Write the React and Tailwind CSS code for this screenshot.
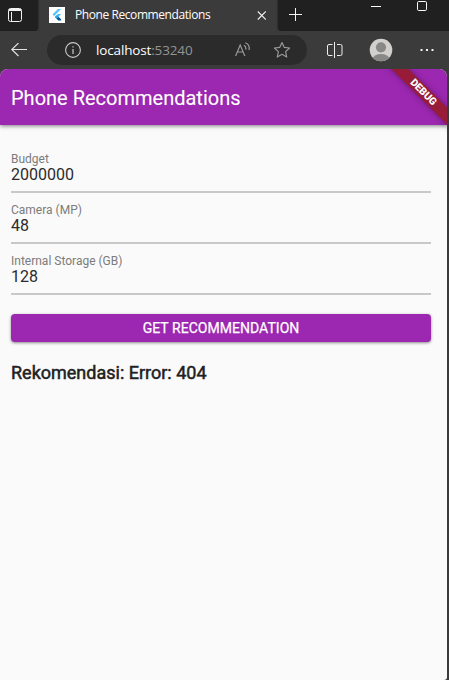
function TabStrip() {
  return (
    <div className="flex h-[31px] bg-[#3b3b3b]">
      <div className="w-[38px] rounded-br-[4px] bg-[#202020] pt-[8px] pl-[8px] shadow-[0_0_2px_#111]">
        <svg width="14" height="14" viewBox="0 0 14 14" fill="none" stroke="#f2f2f2">
          <rect x="0.5" y="0.5" width="13" height="13" rx="2" />
          <path d="M1 1.5H13M1 2.5H13" />
          <path d="M3.5 4V13" />
        </svg>
      </div>
      <div className="flex w-[240px] pt-[7px] pl-[11px]">
        <svg width="16" height="16" viewBox="0 0 16 16">
          <path d="M0 0H16V16H0z" fill="#fff" />
          <path d="M8.9 2H12.1L5.1 9L3.5 7.4z" fill="#54c5f8" />
          <path d="M8.9 7H12.1L9.4 9.8L12.1 12.6H8.9L6.1 9.8z" fill="#45bdf0" />
          <path d="M6.1 9.8L7.7 11.4L9.3 9.8L12.1 12.6V13.6H9.3L5.8 10.1z" fill="#01579b" />
          <path d="M6.1 9.8L7.7 8.2L9.3 9.8L7.7 11.4z" fill="#29a4e8" />
        </svg>
        <span className="ml-[10px] h-4 w-[136px] whitespace-nowrap font-['Open_Sans',sans-serif] text-[12px] leading-4 tracking-[-0.42px] text-white">
          Phone Recommendations
        </span>
        <svg className="mt-[4px] ml-[46px]" width="9" height="9" viewBox="0 0 9 9" stroke="#f2f2f2" strokeWidth="1.1">
          <path d="M.8 .5L8.8 8.5M8.8 .5L.8 8.5" />
        </svg>
      </div>
      <div className="flex flex-1 rounded-bl-[4px] bg-[#202020] shadow-[0_0_2px_#111]">
        <svg className="mt-[8px] ml-[11px]" width="13" height="13" viewBox="0 0 13 13" stroke="#f5f5f5">
          <path d="M0 6.5H13M6.5 0V13" />
        </svg>
        <svg className="mt-[1px] ml-[69px]" width="10" height="10" viewBox="0 0 10 10" stroke="#fff">
          <path d="M0 5.5H10" />
        </svg>
        <svg className="mt-[1px] ml-[36px]" width="10" height="10" viewBox="0 0 10 10" fill="none" stroke="#fff">
          <rect x=".5" y=".5" width="9" height="9" rx="1.2" />
        </svg>
      </div>
    </div>
  );
}

function Toolbar() {
  return (
    <div className="flex h-[38px] items-center bg-[#3b3b3b]">
      <svg className="ml-[11px]" width="16" height="14" viewBox="0 0 16 14" fill="none" stroke="#e4e4e4" strokeWidth="1.1">
        <path d="M16 6.5H.8M7.5 0L.8 6.5L7.5 13" />
      </svg>
      <div className="ml-[20px] flex h-[30px] w-[260px] items-center rounded-full bg-[#2b2b2b]">
        <svg className="ml-[18px]" width="16" height="16" viewBox="0 0 16 16" fill="none" stroke="#c9c9c9">
          <circle cx="8" cy="8" r="7.4" strokeWidth="1.1" />
          <path d="M8 7V12M8 4.2V5.5" strokeWidth="1.2" />
        </svg>
        <span className="ml-[15px] w-[110px] whitespace-nowrap font-['Open_Sans',sans-serif] text-[13.5px] leading-5 tracking-[-0.15px] text-white">
          localhost<span className="text-[#949494]">:53240</span>
        </span>
        <svg className="ml-[29px]" width="16" height="16" viewBox="0 0 16 16" fill="none" stroke="#999">
          <path d="M.6 14L5.2 3.1L9.8 14M2.3 10H8.1M9 3.2C10.6 4.2 11.1 5.8 10.8 7.6M10.3 .8C13.7 2.2 14.7 4.9 14 8" strokeWidth="1.2" />
        </svg>
        <svg className="ml-[22px]" width="18" height="18" viewBox="0 0 18 18" fill="none" stroke="#999">
          <path d="M9 1.5L11.2 6.3L16.6 7L12.6 10.6L13.7 16L9 13.3L4.3 16L5.4 10.6L1.4 7L6.8 6.3z" strokeWidth="1.2" strokeLinejoin="round" />
        </svg>
      </div>
      <svg className="ml-[19px]" width="17" height="16" viewBox="0 0 17 16" fill="none" stroke="#ededed">
        <path d="M6.5 2.5H3Q1.5 2.5 1.5 4V12Q1.5 13.5 3 13.5H6.5M11 2.5H14.5Q16 2.5 16 4V12Q16 13.5 14.5 13.5H11M8.5 0V16" />
      </svg>
      <svg className="ml-[26px]" width="24" height="24" viewBox="0 0 24 24">
        <defs>
          <clipPath id="avatar">
            <circle cx="12" cy="12" r="11.3" />
          </clipPath>
        </defs>
        <g clipPath="url(#avatar)">
          <path d="M0 0H24V24H0z" fill="#d2d0ce" />
          <circle cx="12" cy="9.3" r="5.1" fill="#8a8886" />
          <ellipse cx="12" cy="21" rx="8.3" ry="5" fill="#8a8886" />
        </g>
      </svg>
      <svg className="ml-[27px]" width="14" height="4" viewBox="0 0 14 4" fill="#f2f2f2">
        <path d="M.5 1H2.5V3H.5zM6 1H8V3H6zM11.5 1H13.5V3H11.5z" />
      </svg>
    </div>
  );
}

function Field({ label, value }) {
  return (
    <div className="h-[51px] border-b-2 border-[#c8c8c8] pt-[10px]">
      <div className="text-[12px] leading-[14px] text-[#7c7c7c]">{label}</div>
      <div className="text-[16px] leading-[18px] text-[#2b2b2b]">{value}</div>
    </div>
  );
}

export default function App() {
  return (
    <div className="flex h-[680px] w-[449px] flex-col overflow-hidden bg-[#3b3b3b]">
      <TabStrip />
      <Toolbar />
      <div className="relative h-[611px] w-[447px] overflow-hidden rounded-t-[8px] rounded-br-[3px] bg-[#fafafa] font-[Roboto,sans-serif]">
        <header className="flex h-[56px] items-center bg-[#9c27b0] pt-[2px] pl-[11px] text-[20px] text-white shadow-[0_1px_4px_rgba(0,0,0,0.5)] [-webkit-text-stroke:0.1px_white]">
          Phone Recommendations
        </header>
        <div className="absolute top-[18px] left-[363.5px] h-[12px] w-[120px] rotate-45 bg-[#981c38] pr-[2px] text-center text-[10.2px] leading-[12px] font-black text-white shadow-[0_0_6px_rgba(0,0,0,0.35)]">
          DEBUG
        </div>
        <main className="w-[431px] pt-[17px] pl-[11px]">
          <Field label="Budget" value="2000000" />
          <Field label="Camera (MP)" value="48" />
          <Field label="Internal Storage (GB)" value="128" />
          <button className="mt-[19px] block h-[28px] w-full rounded-[4px] bg-[#9c27b0] text-[14px] leading-[28px] font-normal tracking-[0.04px] text-white shadow-[0_1px_3px_rgba(0,0,0,0.45)] [-webkit-text-stroke:0.25px_white]">
            GET RECOMMENDATION
          </button>
          <p className="mt-[20px] text-[18px] leading-[21px] font-normal text-[#212121] [-webkit-text-stroke:0.5px_#212121]">Rekomendasi: Error: 404</p>
        </main>
      </div>
    </div>
  );
}
